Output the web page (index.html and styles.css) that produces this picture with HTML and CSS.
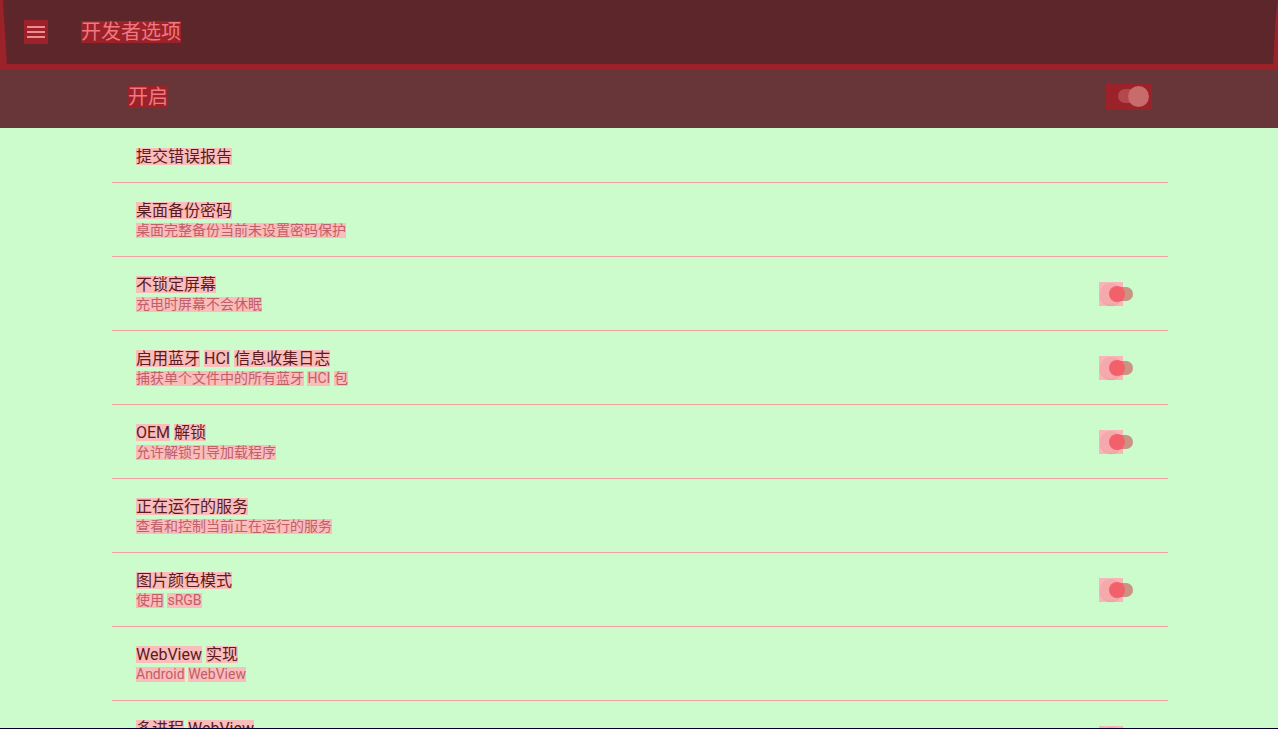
FILE: index.html
```html
<!DOCTYPE html>
<html lang="zh-CN">
<head>
<meta charset="utf-8">
<title>开发者选项</title>
<link rel="stylesheet" href="styles.css">
</head>
<body>
<div class="screen">
  <header class="appbar">
    <div class="menu-btn">
      <svg width="24" height="24" viewBox="0 0 24 24"><rect x="3" y="6" width="18" height="2" fill="#f08a8f"/><rect x="3" y="11" width="18" height="2" fill="#f08a8f"/><rect x="3" y="16" width="18" height="2" fill="#f08a8f"/></svg>
    </div>
    <h1 class="appbar-title"><span class="hl-dark">开发者选项</span></h1>
  </header>
  <div class="master">
    <div class="master-label"><span class="hl-dark">开启</span></div>
    <div class="master-switch">
      <span class="ms-track"></span>
      <span class="ms-thumb"></span>
    </div>
  </div>
  <main class="list">
    <div class="row single">
      <div class="texts">
        <div class="title"><span class="hl">提交错误报告</span></div>
      </div>
    </div>
    <div class="row">
      <div class="texts">
        <div class="title"><span class="hl">桌面备份密码</span></div>
        <div class="sub"><span class="hl">桌面完整备份当前未设置密码保护</span></div>
      </div>
    </div>
    <div class="row">
      <div class="texts">
        <div class="title"><span class="hl">不锁定屏幕</span></div>
        <div class="sub"><span class="hl">充电时屏幕不会休眠</span></div>
      </div>
      <div class="switch"><span class="sw-box"></span><span class="sw-ring"></span><span class="sw-track"></span><span class="sw-thumb"></span></div>
    </div>
    <div class="row">
      <div class="texts">
        <div class="title"><span class="hl">启用蓝牙</span> <span class="hl">HCI</span> <span class="hl">信息收集日志</span></div>
        <div class="sub"><span class="hl">捕获单个文件中的所有蓝牙</span> <span class="hl">HCI</span> <span class="hl">包</span></div>
      </div>
      <div class="switch"><span class="sw-box"></span><span class="sw-ring"></span><span class="sw-track"></span><span class="sw-thumb"></span></div>
    </div>
    <div class="row">
      <div class="texts">
        <div class="title"><span class="hl">OEM</span> <span class="hl">解锁</span></div>
        <div class="sub"><span class="hl">允许解锁引导加载程序</span></div>
      </div>
      <div class="switch"><span class="sw-box"></span><span class="sw-ring"></span><span class="sw-track"></span><span class="sw-thumb"></span></div>
    </div>
    <div class="row">
      <div class="texts">
        <div class="title"><span class="hl">正在运行的服务</span></div>
        <div class="sub"><span class="hl">查看和控制当前正在运行的服务</span></div>
      </div>
    </div>
    <div class="row">
      <div class="texts">
        <div class="title"><span class="hl">图片颜色模式</span></div>
        <div class="sub"><span class="hl">使用</span> <span class="hl">sRGB</span></div>
      </div>
      <div class="switch"><span class="sw-box"></span><span class="sw-ring"></span><span class="sw-track"></span><span class="sw-thumb"></span></div>
    </div>
    <div class="row">
      <div class="texts">
        <div class="title"><span class="hl">WebView</span> <span class="hl">实现</span></div>
        <div class="sub"><span class="hl">Android</span> <span class="hl">WebView</span></div>
      </div>
    </div>
    <div class="row">
      <div class="texts">
        <div class="title"><span class="hl">多进程</span> <span class="hl">WebView</span></div>
        <div class="sub"><span class="hl">在独立的进程中运行</span> <span class="hl">WebView</span> <span class="hl">渲染程序</span></div>
      </div>
      <div class="switch"><span class="sw-box"></span><span class="sw-ring"></span><span class="sw-track"></span><span class="sw-thumb"></span></div>
    </div>
  </main>
</div>
</body>
</html>
```

FILE: styles.css
```css
* { box-sizing: border-box; }
html, body {
  margin: 0;
  padding: 0;
  background: #ccfccb;
}
body {
  font-family: Roboto, "Noto Sans CJK SC", sans-serif;
  overflow: hidden;
}
.screen {
  width: 1278px;
  height: 729px;
  overflow: hidden;
  background: #ccfccb;
  border-bottom: 1px solid #00002a;
  display: flex;
  flex-direction: column;
  position: relative;
}
.appbar {
  flex: 0 0 70px;
  height: 70px;
  background: #5c262b;
  border-bottom: 6px solid #9a2228;
  display: flex;
  align-items: center;
  padding-left: 24px;
  position: relative;
}
.appbar::before {
  content: "";
  position: absolute;
  left: 0;
  top: 0;
  width: 8px;
  height: 64px;
  background: #9a2228;
  clip-path: polygon(0 0, 3px 0, 7px 100%, 0 100%);
}
.appbar::after {
  content: "";
  position: absolute;
  right: 0;
  top: 0;
  width: 6px;
  height: 64px;
  background: #9a2228;
  clip-path: polygon(4px 14px, 6px 0, 6px 100%, 1px 100%);
}
.menu-btn {
  width: 24px;
  height: 24px;
  background: #9a2228;
  display: flex;
}
.appbar-title {
  margin: 0 0 0 33px;
  font-size: 20px;
  font-weight: 400;
  color: #f07880;
  line-height: 24px;
}
.hl-dark {
  background: #9a2228;
  display: inline-block;
  line-height: 22px;
}
.master {
  flex: 0 0 58px;
  height: 58px;
  background: #683539;
  display: flex;
  align-items: center;
  justify-content: space-between;
  padding-left: 128px;
  padding-right: 126px;
  padding-bottom: 5px;
}
.master-label {
  font-size: 20px;
  color: #f07880;
  line-height: 24px;
}
.master-switch {
  width: 46px;
  height: 27px;
  background: #9a2228;
  position: relative;
}
.ms-track {
  position: absolute;
  left: 12px;
  top: 6px;
  width: 24px;
  height: 14px;
  border-radius: 7px;
  background: #b3474d;
}
.ms-thumb {
  position: absolute;
  left: 22px;
  top: 3px;
  width: 21px;
  height: 21px;
  border-radius: 50%;
  background: #c86b6b;
}
.list {
  margin: 0 110px 0 112px;
  display: flex;
  flex-direction: column;
}
.row {
  height: 74px;
  flex: 0 0 74px;
  border-bottom: 1px solid #f0a0a4;
  display: flex;
  align-items: center;
  justify-content: space-between;
  padding-left: 24px;
  padding-right: 35px;
}
.row.single {
  height: 55px;
  flex: 0 0 55px;
}
.texts {
  display: flex;
  flex-direction: column;
}
.title {
  font-size: 16px;
  line-height: 21px;
  color: #5a1b20;
}
.sub {
  font-size: 14px;
  line-height: 21px;
  color: #bf5f68;
}
.hl {
  background: #fbbcbc;
  display: inline-block;
  line-height: 1.08;
  vertical-align: middle;
}
.switch {
  width: 34px;
  height: 24px;
  position: relative;
}
.sw-box {
  position: absolute;
  left: 0;
  top: 0;
  width: 24px;
  height: 24px;
  background: #f9b6b8;
}
.sw-ring {
  position: absolute;
  left: 1px;
  top: 1px;
  width: 22px;
  height: 22px;
  border-radius: 50%;
  background: #f5a9ad;
  box-shadow: 0 1px 1px rgba(200, 100, 110, 0.3);
}
.sw-track {
  position: absolute;
  left: 14px;
  top: 5px;
  width: 20px;
  height: 14px;
  border-radius: 7px;
  background: rgba(200, 60, 75, 0.55);
}
.sw-thumb {
  position: absolute;
  left: 10px;
  top: 4px;
  width: 16px;
  height: 16px;
  border-radius: 50%;
  background: #f2606a;
}
```
